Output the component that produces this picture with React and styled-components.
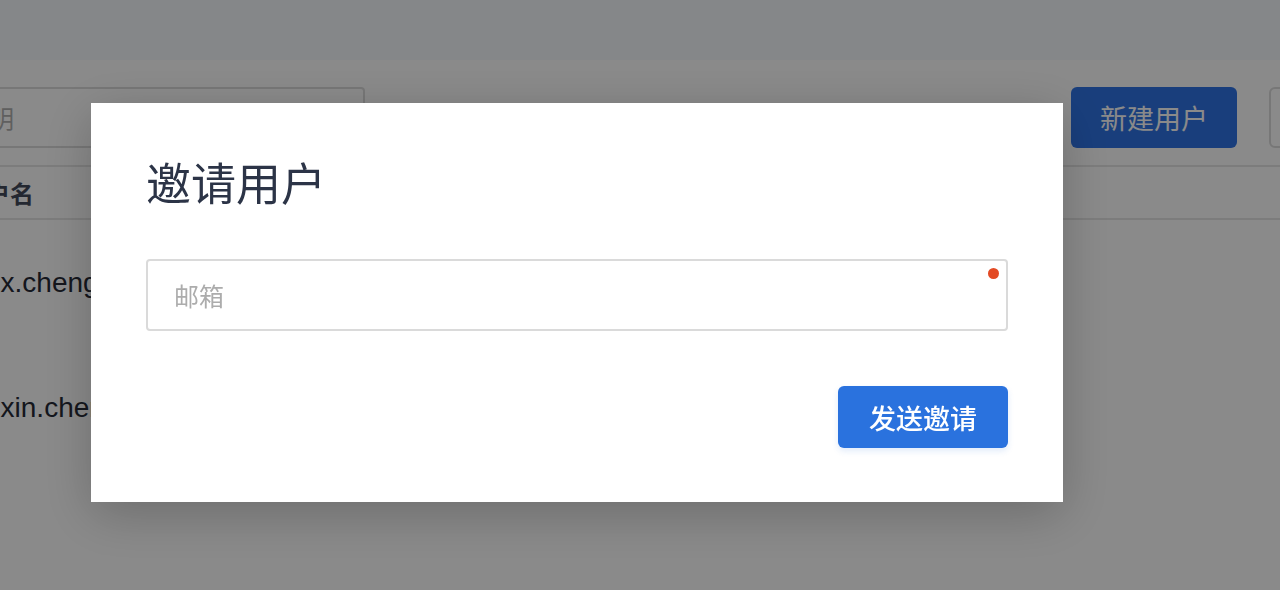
import React from 'react'
import styled, { createGlobalStyle } from 'styled-components'

/* STYLES */
const GlobalStyle = createGlobalStyle`
  html, body {
    margin: 0;
    padding: 0;
    overflow: hidden;
    background: #ffffff;
    font-family: "Liberation Sans", "Noto Sans CJK SC", sans-serif;
  }
  * { box-sizing: border-box; }
`

const Page = styled.div`
  width: 1280px;
  height: 590px;
  overflow: hidden;
  background: #ffffff;
`

const Header = styled.div`
  height: 60px;
  background: #f6fafe;
`

const Content = styled.div`
  width: 1491px;
  margin-left: -62px;
  padding-top: 27px;
`

const Toolbar = styled.div`
  display: flex;
  align-items: center;
  height: 61px;
`

const Search = styled.div`
  width: 427px;
  height: 61px;
  border: 2px solid #dcdcdc;
  border-radius: 4px;
  padding-left: 26px;
  display: flex;
  align-items: center;
  font-family: "Noto Sans CJK SC", sans-serif;
  font-size: 24px;
  color: #b0b0b0;
`

const Actions = styled.div`
  margin-left: auto;
  display: flex;
  gap: 32px;
`

const ToolButton = styled.div`
  height: 61px;
  width: ${p => p.$width}px;
  border-radius: 6px;
  display: flex;
  align-items: center;
  justify-content: center;
  font-family: "Noto Sans CJK SC", sans-serif;
  font-size: 27px;
  color: ${p => (p.$primary ? '#ffffff' : '#333')};
  background: ${p => (p.$primary ? '#2f74e6' : '#ffffff')};
  border: ${p => (p.$primary ? 'none' : '2px solid #dcdcdc')};
`

const Table = styled.div`
  margin-top: 17px;
`

const HeadRow = styled.div`
  height: 55px;
  border-top: 2px solid #e6e6e6;
  border-bottom: 2px solid #e6e6e6;
  display: flex;
  align-items: center;
  padding-left: 24px;
  font-family: "Noto Sans CJK SC", sans-serif;
  font-weight: 600;
  font-size: 24px;
  color: #444a5c;
`

const Row = styled.div`
  height: 125px;
  display: flex;
  align-items: center;
  padding-left: 33px;
  font-size: 28px;
  color: #262a36;
`

const Overlay = styled.div`
  position: fixed;
  inset: 0;
  background: rgba(0, 0, 0, 0.46);
  display: flex;
  align-items: flex-start;
  padding: 103px 0 0 91px;
`

const Modal = styled.div`
  width: 972px;
  background: #ffffff;
  padding: 52px 55px 54px;
  box-shadow: 0 12px 48px rgba(0, 0, 0, 0.22);
`

const Title = styled.h2`
  margin: 0;
  height: 53px;
  line-height: 53px;
  font-family: "Noto Sans CJK SC", sans-serif;
  font-weight: 400;
  font-size: 45px;
  color: #2c3447;
`

const Field = styled.div`
  position: relative;
  margin-top: 51px;
  height: 72px;
  border: 2px solid #dadada;
  border-radius: 4px;
  display: flex;
  align-items: center;
  padding-left: 26px;
`

const Placeholder = styled.span`
  font-family: "Noto Sans CJK SC", sans-serif;
  font-size: 25px;
  color: #acacac;
`

const RequiredDot = styled.span`
  position: absolute;
  top: 7px;
  right: 7px;
  width: 11px;
  height: 11px;
  border-radius: 50%;
  background: #e34a24;
`

const Footer = styled.div`
  margin-top: 55px;
  display: flex;
  justify-content: flex-end;
`

const SendButton = styled.button`
  width: 170px;
  height: 62px;
  border: none;
  border-radius: 6px;
  background: #2a72de;
  color: #ffffff;
  font-family: "Noto Sans CJK SC", sans-serif;
  font-size: 27px;
  font-weight: 500;
  box-shadow: 0 3px 6px rgba(42, 114, 222, 0.14);
  cursor: pointer;
`

/* PRESENTATION */
const users = ['yux.cheng', 'yuxin.cheng']

export default function App () {
  return (
    <>
      <GlobalStyle />
      <Page>
        <Header />
        <Content>
          <Toolbar>
            <Search>说明</Search>
            <Actions>
              <ToolButton $primary $width={166}>新建用户</ToolButton>
              <ToolButton $width={160}>导出</ToolButton>
            </Actions>
          </Toolbar>
          <Table>
            <HeadRow>用户名</HeadRow>
            {users.map(u => <Row key={u}>{u}</Row>)}
          </Table>
        </Content>
      </Page>
      <Overlay>
        <Modal>
          <Title>邀请用户</Title>
          <Field>
            <Placeholder>邮箱</Placeholder>
            <RequiredDot />
          </Field>
          <Footer>
            <SendButton>发送邀请</SendButton>
          </Footer>
        </Modal>
      </Overlay>
    </>
  )
}
